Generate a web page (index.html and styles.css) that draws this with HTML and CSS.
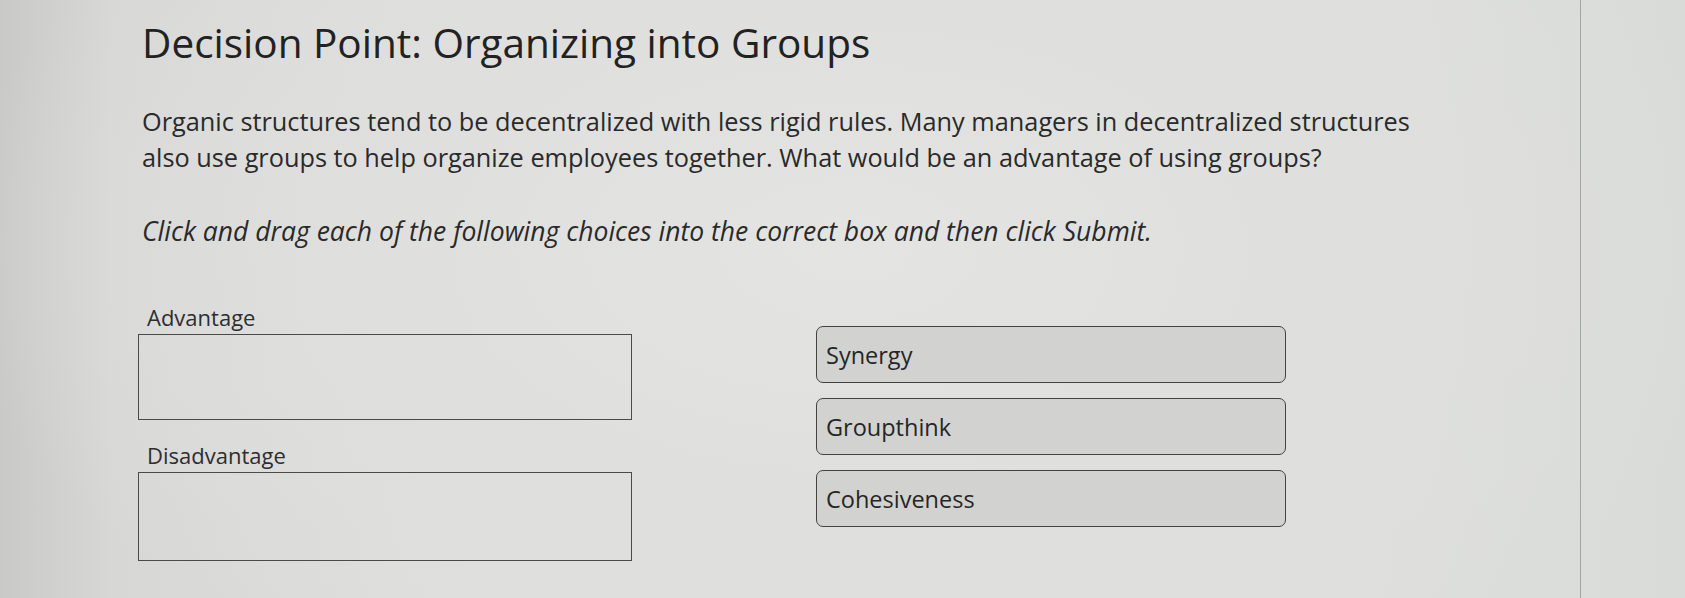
FILE: index.html
```html
<!DOCTYPE html>
<html>
<head>
<meta charset="utf-8">
<link rel="stylesheet" href="styles.css">
</head>
<body>
<div class="panel">
  <div class="content">
    <h1 class="title">Decision Point: Organizing into Groups</h1>
    <p class="intro">Organic structures tend to be decentralized with less rigid rules. Many managers in decentralized structures also use groups to help organize employees together. What would be an advantage of using groups?</p>
    <p class="instruction">Click and drag each of the following choices into the correct box and then click Submit.</p>
    <div class="dnd">
      <div class="targets">
        <div class="target-label">Advantage</div>
        <div class="drop"></div>
        <div class="target-label second">Disadvantage</div>
        <div class="drop tall"></div>
      </div>
      <div class="choices">
        <div class="choice">Synergy</div>
        <div class="choice">Groupthink</div>
        <div class="choice">Cohesiveness</div>
      </div>
    </div>
  </div>
</div>
</body>
</html>
```

FILE: styles.css
```css
html, body {
  margin: 0;
  padding: 0;
  height: 100%;
}
body {
  background:
    radial-gradient(ellipse 900px 500px at 850px 250px, #e4e5e3 0%, #dfe0de 50%, rgba(223,224,222,0) 100%),
    linear-gradient(90deg, #c9c9c8 0px, #d7d7d6 110px, #dfe0de 480px, #dfe0de 1300px, #d9dbd9 1685px);
  font-family: "Open Sans", "Noto Sans", sans-serif;
  color: #2a2a2a;
  overflow: hidden;
}
.panel {
  width: 1581px;
  height: 598px;
  border-right: 1px solid #a3a6a4;
  box-sizing: border-box;
}
.content {
  padding-left: 142px;
  padding-top: 16px;
  width: 1300px;
}
.title {
  margin: 0;
  font-size: 40.5px;
  font-weight: 400;
  line-height: 54px;
  color: #222;
}
.intro {
  margin: 33px 0 0 0;
  font-size: 25.3px;
  line-height: 36px;
  color: #2a2a2a;
}
.instruction {
  margin: 38px 0 0 0;
  font-size: 26.5px;
  line-height: 36px;
  font-style: italic;
  color: #2a2a2a;
}
.dnd {
  display: flex;
  gap: 184px;
  margin-top: 54px;
}
.targets {
  width: 494px;
  margin-left: -4px;
  display: flex;
  flex-direction: column;
}
.target-label {
  font-size: 22px;
  line-height: 28px;
  color: #2e2e2e;
  padding-left: 9px;
  margin-bottom: 3px;
}
.target-label.second {
  margin-top: 21px;
}
.drop {
  border: 1.5px solid #4a4a4a;
  box-sizing: border-box;
  height: 86px;
}
.drop.tall {
  height: 89px;
}
.choices {
  width: 470px;
  margin-top: 23px;
  display: flex;
  flex-direction: column;
  gap: 15px;
}
.choice {
  height: 57px;
  box-sizing: border-box;
  border: 1.5px solid #424242;
  border-radius: 7px;
  background: #d2d3d1;
  padding-left: 9px;
  display: flex;
  align-items: center;
  font-size: 23.5px;
  color: #262626;
}
```
